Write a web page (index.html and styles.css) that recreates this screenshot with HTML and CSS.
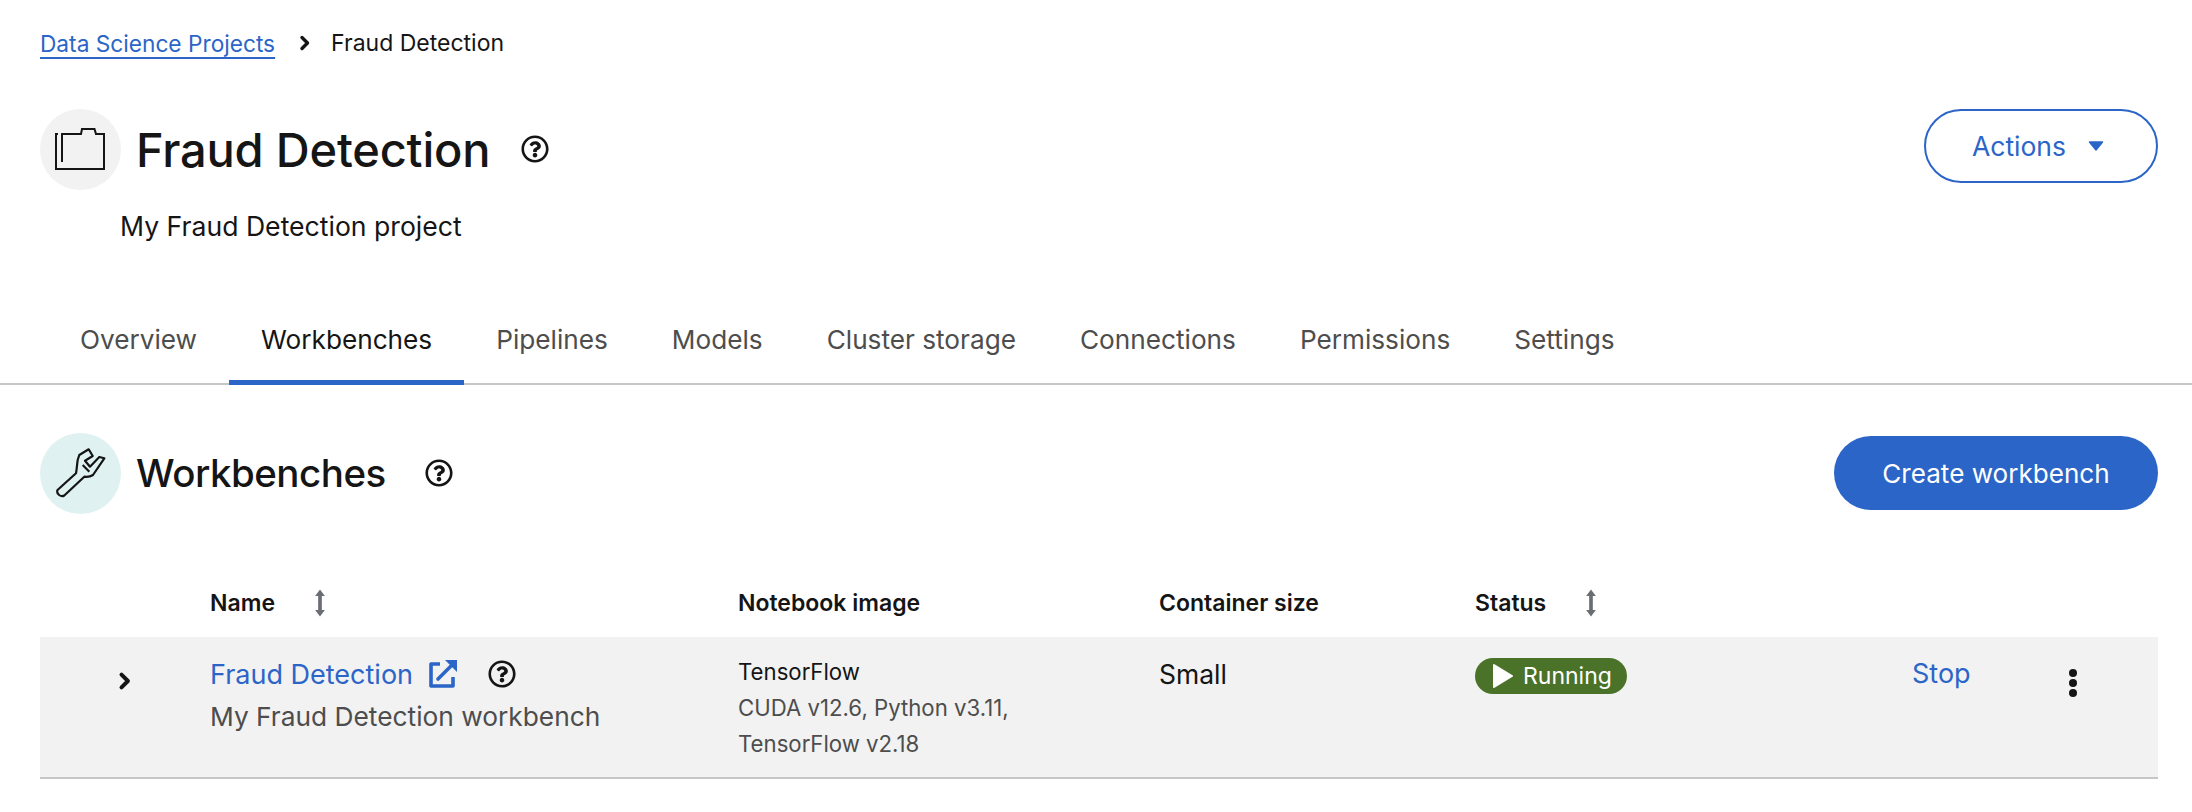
FILE: index.html
```html
<!DOCTYPE html>
<html lang="en">
<head>
<meta charset="utf-8">
<title>Fraud Detection</title>
<link rel="stylesheet" href="styles.css">
</head>
<body>
<svg class="defs" width="0" height="0" aria-hidden="true"><defs>
<symbol id="help" viewBox="0 0 512 512"><path d="M256 8C119.043 8 8 119.083 8 256c0 136.997 111.043 248 248 248s248-111.003 248-248C504 119.083 392.957 8 256 8zm0 448c-110.532 0-200-89.431-200-200 0-110.495 89.472-200 200-200 110.491 0 200 89.471 200 200 0 110.53-89.431 200-200 200zm107.244-255.2c0 67.052-72.421 68.084-72.421 92.863V300c0 6.627-5.373 12-12 12h-45.647c-6.627 0-12-5.373-12-12v-8.659c0-35.745 27.1-50.034 47.579-61.516 17.561-9.845 28.324-16.541 28.324-29.579 0-17.246-21.999-28.693-39.784-28.693-23.189 0-33.894 10.977-48.942 29.969-4.057 5.12-11.46 6.071-16.666 2.124l-27.824-21.098c-5.107-3.872-6.251-11.066-2.644-16.363C184.846 131.491 214.94 112 261.794 112c49.071 0 101.45 38.304 101.45 88.8zM298 368c0 23.159-18.841 42-42 42s-42-18.841-42-42 18.841-42 42-42 42 18.841 42 42z"/></symbol>
<symbol id="sort" viewBox="0 0 12 26"><path d="M6 0.5 10.5 6.500H7.700V19.500H10.500L6 25.500 1.500 19.500H4.300V6.500H1.500Z"/></symbol>
<symbol id="chev" viewBox="0 0 12 16"><path d="M3 2.500 8.500 8 3 13.500" fill="none" stroke="currentColor" stroke-width="3.400" stroke-linejoin="round" stroke-linecap="round"/></symbol>
</defs></svg>

<nav class="crumbs">
  <a class="crumb-link" href="#">Data Science Projects</a>
  <svg class="crumb-sep"><use href="#chev"/></svg>
  <span class="crumb-current">Fraud Detection</span>
</nav>

<header class="page-head">
  <div class="head-row">
    <span class="disc disc-grey">
      <svg class="glyph" width="52" height="44" viewBox="0 0 52 44" fill="none" stroke="#151515" stroke-width="2"><path d="M7 35V7H26L27 2H39.500L41 7H49V42H1V7H3"/></svg>
    </span>
    <h1 class="title">Fraud Detection</h1>
    <svg class="help help-title"><use href="#help"/></svg>
    <button class="btn btn-outline">Actions
      <svg class="caret" width="16" height="10" viewBox="0 0 16 10"><path d="M1.500 1H14.500L8 9Z" fill="currentColor" stroke="currentColor" stroke-width="1.500" stroke-linejoin="round"/></svg>
    </button>
  </div>
  <p class="project-desc">My Fraud Detection project</p>
</header>

<div class="tabs">
  <a class="tab" href="#">Overview</a>
  <a class="tab tab-active" href="#">Workbenches</a>
  <a class="tab" href="#">Pipelines</a>
  <a class="tab" href="#">Models</a>
  <a class="tab" href="#">Cluster storage</a>
  <a class="tab" href="#">Connections</a>
  <a class="tab" href="#">Permissions</a>
  <a class="tab" href="#">Settings</a>
</div>

<section class="section">
  <div class="section-head">
    <span class="disc disc-teal">
      <svg class="glyph" width="50" height="50" viewBox="0 0 50 50" fill="none" stroke="#151515" stroke-width="2.200" stroke-linejoin="round"><path d="M1.500 42 20 25.300C21 20 21 16 21.700 12L23.300 7 32.700 1.300 36.700 8 29 12.700 34 18.700 43.300 9 48.300 10.300 37 27C34 29 31 29 28.300 28.700L8.300 47.500C5 49.500 0 46 1.500 42ZM26.700 17 33.300 23.700"/></svg>
    </span>
    <h2 class="section-title">Workbenches</h2>
    <svg class="help help-section"><use href="#help"/></svg>
    <button class="btn btn-solid">Create workbench</button>
  </div>

  <div class="table">
    <div class="grid thead">
      <div></div>
      <div class="th">Name <svg class="sort sort-name"><use href="#sort"/></svg></div>
      <div class="th">Notebook image</div>
      <div class="th">Container size</div>
      <div class="th">Status <svg class="sort sort-status"><use href="#sort"/></svg></div>
      <div></div>
    </div>
    <div class="grid row">
      <div class="cell-toggle"><svg class="row-chev"><use href="#chev"/></svg></div>
      <div class="cell-name">
        <div class="name-line">
          <a class="link" href="#">Fraud Detection</a>
          <svg class="ext" width="30" height="30" viewBox="0 0 30 30" fill="none" stroke="#2b65c8" stroke-width="3.600"><path d="M12 5H3V27H25V18" stroke-linejoin="round"/><path d="M10 20 26 4" stroke-linecap="round"/><path d="M17 1H29V13Z" fill="#2b65c8" stroke="none"/></svg>
          <svg class="help help-row"><use href="#help"/></svg>
        </div>
        <div class="muted">My Fraud Detection workbench</div>
      </div>
      <div class="cell-image">
        <div class="img-name">TensorFlow</div>
        <div class="img-meta">CUDA v12.6, Python v3.11,<br>TensorFlow v2.18</div>
      </div>
      <div class="cell-size">Small</div>
      <div class="cell-status">
        <span class="badge">
          <svg width="22" height="26" viewBox="0 0 22 26"><path d="M2 2 20 13 2 24Z" fill="#fff" stroke="#fff" stroke-width="2" stroke-linejoin="round"/></svg>
          Running
        </span>
      </div>
      <div class="cell-actions">
        <a class="link" href="#">Stop</a>
        <svg class="kebab" width="10" height="28" viewBox="0 0 10 28"><circle cx="5" cy="4" r="4"/><circle cx="5" cy="14" r="4"/><circle cx="5" cy="24" r="4"/></svg>
      </div>
    </div>
  </div>
</section>
</body>
</html>
```
FILE: styles.css
```css
* { box-sizing: border-box; }
html, body { margin: 0; padding: 0; }
body {
  font-family: "Inter", "Liberation Sans", sans-serif;
  color: #151515;
  background: #fff;
  width: 2192px;
  height: 812px;
  overflow: hidden;
}
.defs { position: absolute; }
svg { display: block; flex: none; }
button { font: inherit; }

.crumbs {
  display: flex;
  align-items: center;
  height: 28px;
  margin: 29px 0 0 40px;
  font-size: 22.700px;
}
.crumb-link { color: #2b65c8; text-underline-offset: 5px; text-decoration-thickness: 2px; }
.crumb-sep { width: 12px; height: 16px; margin: 0 20px 0 24px; color: #151515; }
.crumb-current { font-size: 23px; }

.page-head { padding: 0 34px 0 40px; margin-top: 52px; }
.head-row { display: flex; align-items: center; height: 80px; }
.disc {
  width: 81px; height: 81px; border-radius: 50%;
  display: flex; align-items: center; justify-content: center; flex: none;
}
.disc-grey { background: #f2f2f2; }
.disc-teal { background: #dff2f1; }
.title { margin: 0 0 0 15px; font-size: 47px; font-weight: 500; letter-spacing: -0.2px; }
.help { fill: #151515; }
.help-title { width: 28px; height: 28px; margin-left: 31px; }
.btn { border-radius: 37px; height: 74px; cursor: pointer; font-size: 26.500px; display: flex; align-items: center; justify-content: center; }
.btn-outline {
  margin-left: auto; width: 234px; gap: 22px; align-self: flex-start; padding: 0 6px 0 0;
  background: #fff; color: #2b65c8; border: 2px solid #2b65c8;
}
.project-desc { margin: 20px 0 0 80px; font-size: 26.600px; line-height: 34px; }

.tabs {
  display: flex;
  margin-top: 58px;
  padding-left: 48px;
  border-bottom: 2px solid #c7c7c7;
  height: 84px;
}
.tab {
  padding: 0 32px 2px; height: 84px; display: flex; align-items: center;
  font-size: 26.200px; color: #4d4d4d; text-decoration: none;
  border-bottom: 5px solid transparent;
}
.tab-active { color: #151515; border-bottom-color: #2b65c8; }

.section { padding: 0 34px 0 40px; margin-top: 48px; }
.section-head { display: flex; align-items: center; height: 80px; }
.section-title { margin: 0 0 0 15px; font-size: 38.500px; font-weight: 500; letter-spacing: -0.5px; }
.help-section { width: 28px; height: 28px; margin-left: 39px; }
.btn-solid { margin-left: auto; width: 324px; background: #2b65c8; color: #fff; border: 0; font-size: 26.100px; }

.table { margin-top: 62px; }
.grid { display: grid; grid-template-columns: 170px 528px 421px 316px 437px 1fr; }
.thead { height: 62px; align-items: center; padding-bottom: 6px; }
.th { font-size: 23px; font-weight: 600; display: flex; align-items: center; }
.sort { width: 14px; height: 28px; fill: #6a6e73; }
.sort-name { margin-left: 38px; }
.sort-status { margin-left: 38px; }

.row { background: #f2f2f2; height: 142px; border-bottom: 2px solid #c7c7c7; }
.cell-toggle { padding: 34px 0 0 78px; }
.row-chev { width: 14px; height: 20px; color: #151515; }
.cell-name { padding-top: 20px; font-size: 26.300px; }
.name-line { display: flex; align-items: center; height: 34px; }
.link { color: #2b65c8; text-decoration: none; font-size: 27px; }
.ext { margin-left: 15px; }
.help-row { width: 28px; height: 28px; margin-left: 30px; }
.muted { color: #4d4d4d; margin-top: 9px; line-height: 34px; }
.cell-image { padding-top: 20px; }
.img-name { font-size: 22.200px; line-height: 30px; }
.img-meta { font-size: 22.200px; line-height: 36px; color: #4d4d4d; margin-top: 3px; }
.cell-size { padding-top: 20px; font-size: 26.500px; line-height: 34px; }
.cell-status { padding-top: 21px; }
.badge {
  display: inline-flex; align-items: center; gap: 9px;
  height: 36px; width: 152px; padding-left: 17px;
  background: #4b7229; color: #fff; border-radius: 18px; font-size: 23px;
}
.cell-actions { display: flex; padding-top: 20px; }
.cell-actions .link { line-height: 34px; }
.kebab { margin: 12px 0 0 97px; fill: #151515; }
```
